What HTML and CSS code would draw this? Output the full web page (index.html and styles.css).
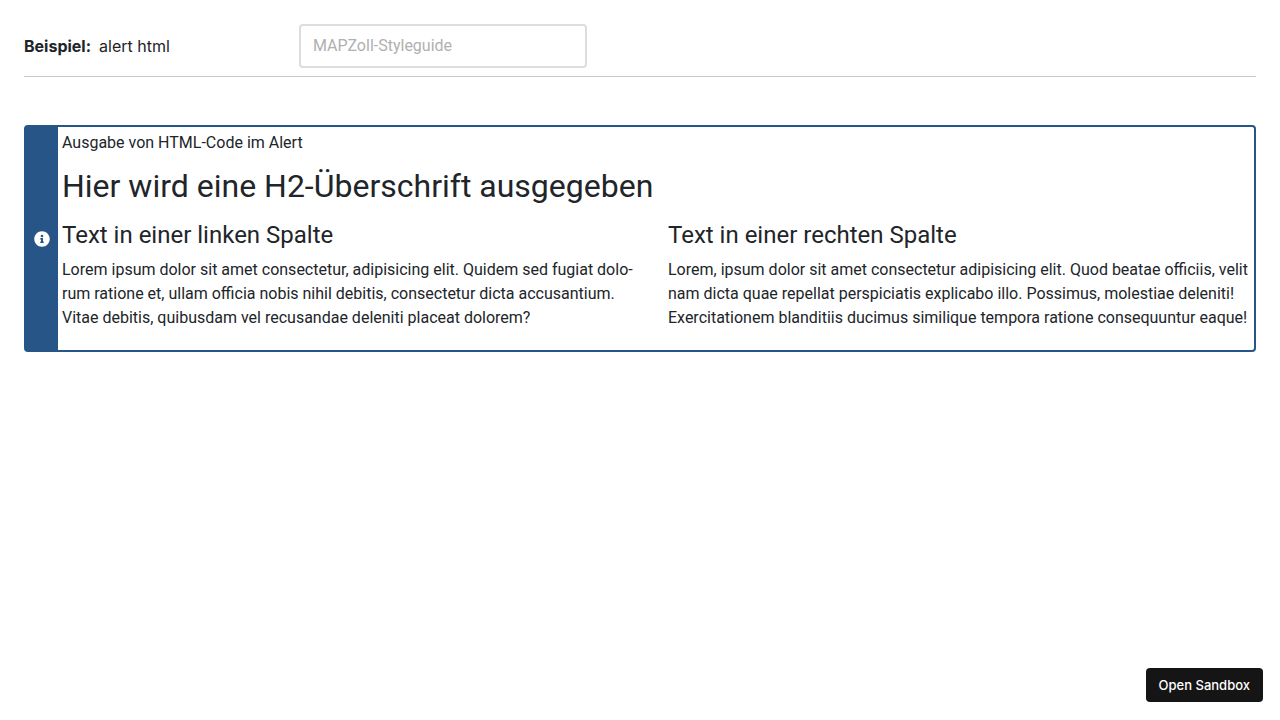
FILE: index.html
```html
<!DOCTYPE html>
<html lang="de">
<head>
<meta charset="utf-8">
<meta name="viewport" content="width=device-width, initial-scale=1">
<title>alert html</title>
<link rel="stylesheet" href="styles.css">
</head>
<body>
<header class="topbar">
  <p class="example"><strong>Beispiel:</strong> <span>alert html</span></p>
  <select class="theme" aria-label="Styleguide" disabled>
    <option>MAPZoll-Styleguide</option>
  </select>
</header>
<main>
  <section class="alert" role="alert">
    <div class="alert-side">
      <svg class="alert-icon" viewBox="0 0 512 512" aria-hidden="true"><path fill="currentColor" d="M256 8C119 8 8 119 8 256s111 248 248 248 248-111 248-248S393 8 256 8zm0 110c23.200 0 42 18.800 42 42s-18.800 42-42 42-42-18.800-42-42 18.800-42 42-42zm56 254c0 6.600-5.400 12-12 12h-88c-6.600 0-12-5.400-12-12v-24c0-6.600 5.400-12 12-12h12v-64h-12c-6.600 0-12-5.400-12-12v-24c0-6.600 5.400-12 12-12h64c6.600 0 12 5.400 12 12v100h12c6.600 0 12 5.400 12 12v24z"/></svg>
    </div>
    <div class="alert-body">
      <p class="alert-title">Ausgabe von HTML-Code im Alert</p>
      <h2>Hier wird eine H2-Überschrift ausgegeben</h2>
      <div class="columns">
        <div>
          <h3>Text in einer linken Spalte</h3>
          <p lang="la">Lorem ipsum dolor sit amet consectetur, adipisicing elit. Quidem sed fugiat dolo&shy;rum ratione et, ullam officia nobis nihil debitis, consectetur dicta accusantium. Vitae debitis, quibusdam vel recusandae deleniti placeat dolorem?</p>
        </div>
        <div>
          <h3>Text in einer rechten Spalte</h3>
          <p lang="la">Lorem, ipsum dolor sit amet consectetur adipisicing elit. Quod beatae officiis, velit nam dicta quae repellat perspiciatis explicabo illo. Possimus, molestiae deleniti! Exercitationem blanditiis ducimus similique tempora ratione consequuntur eaque!</p>
        </div>
      </div>
    </div>
  </section>
</main>
<button class="sandbox" type="button">Open Sandbox</button>
</body>
</html>
```

FILE: styles.css
```css
* { box-sizing: border-box; }
body {
  margin: 0;
  padding: 24px;
  background: #fff;
  color: #212529;
  font: 16px/24px Roboto, sans-serif;
}
h2, h3, p { margin: 0; font-weight: 400; }
.topbar {
  display: grid;
  grid-template-columns: 275px 288px;
  align-items: center;
  padding-bottom: 8px;
  border-bottom: 1px solid #c8c8c8;
  margin-bottom: 48px;
}
.example {
  display: flex;
  gap: 8px;
  font-family: Inter, sans-serif;
}
.theme {
  appearance: none;
  height: 44px;
  padding: 0 12px;
  border: 2px solid #ddd;
  border-radius: 4px;
  background: #fff;
  color: #b0b0b0;
  font: inherit;
  opacity: 1;
}
.alert {
  display: flex;
  border: 2px solid #285587;
  border-radius: 4px;
}
.alert-side {
  display: flex;
  flex: 0 0 32px;
  align-items: center;
  justify-content: center;
  background: #285587;
  color: #fff;
}
.alert-icon { width: 16px; height: 16px; }
.alert-body { flex: 1; padding: 4px 4px 20px; }
.alert-title { margin-bottom: 12px; }
h2 { margin-bottom: 16px; font-size: 32px; line-height: 38px; }
h3 { margin-bottom: 8px; font-size: 24px; line-height: 29px; }
.columns {
  display: grid;
  grid-template-columns: 1fr 1fr;
  gap: 24px;
}
.sandbox {
  position: fixed;
  right: 17px;
  bottom: 18px;
  height: 34px;
  padding: 0 13px;
  border: 0;
  border-radius: 4px;
  background: #151515;
  color: #fff;
  font: 500 13px/16px Inter, sans-serif;
}
```
